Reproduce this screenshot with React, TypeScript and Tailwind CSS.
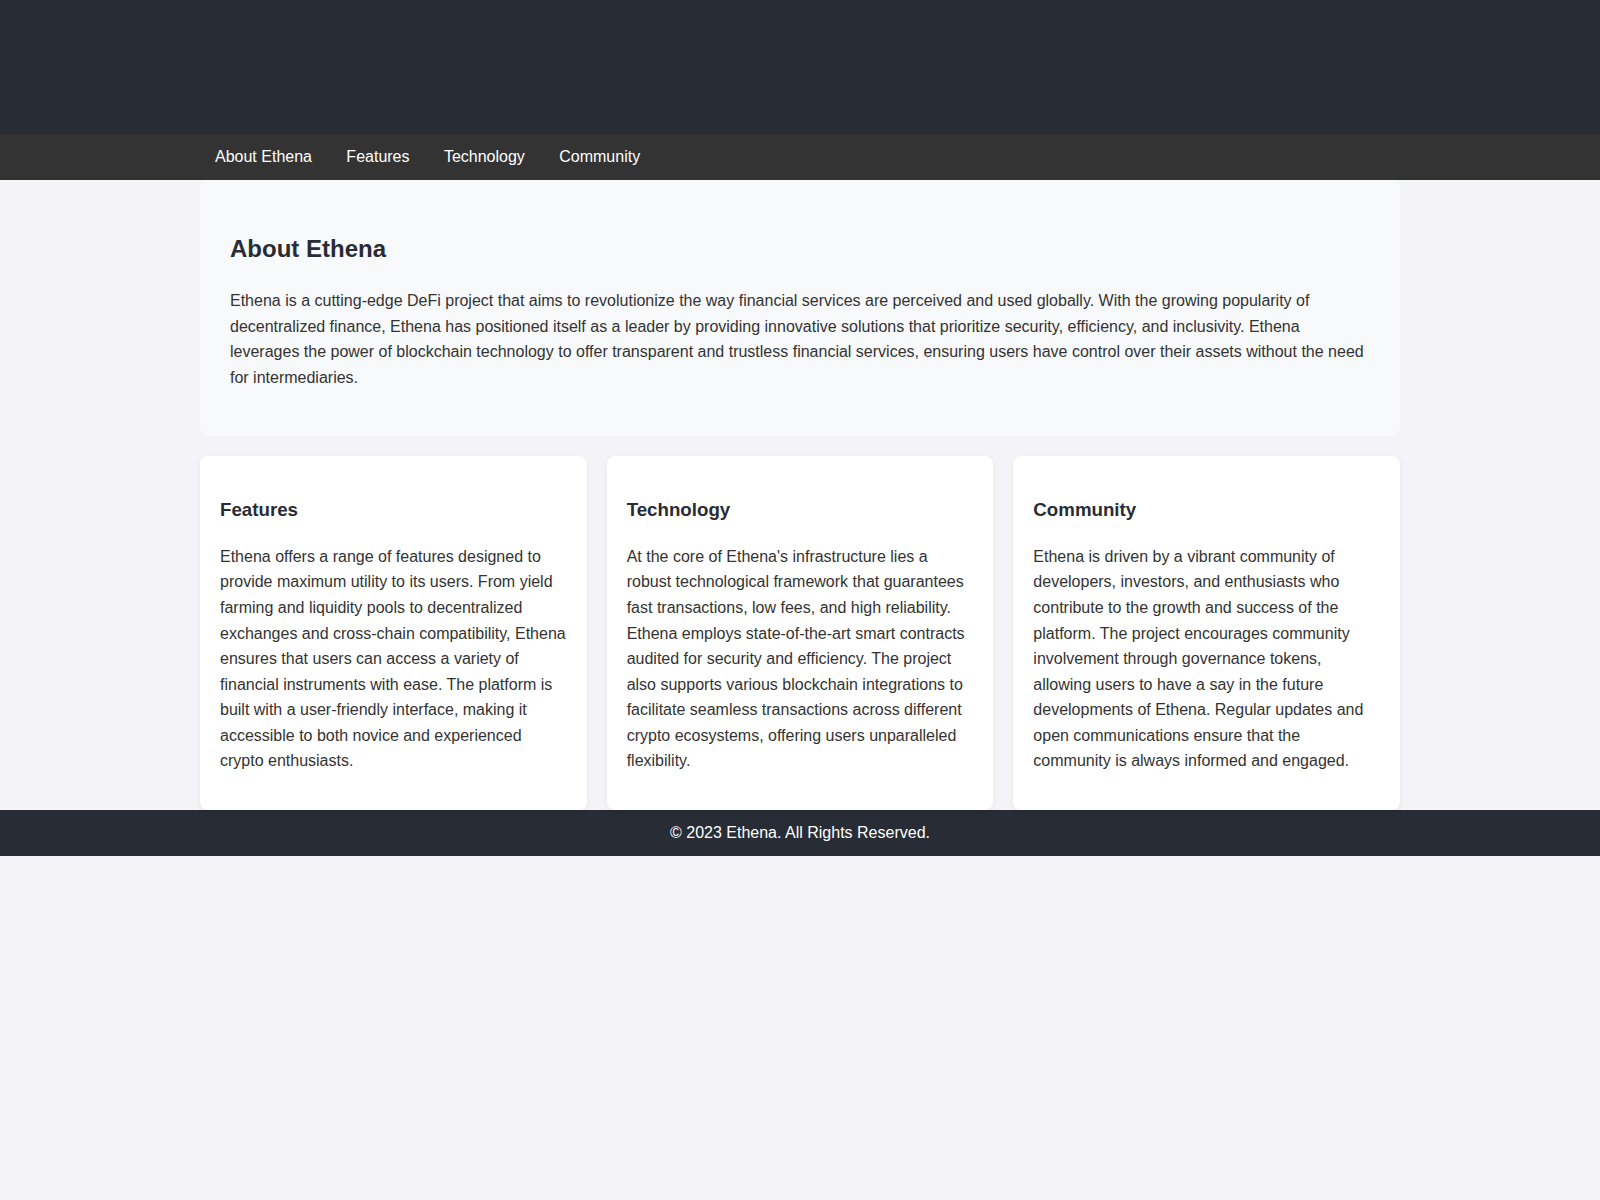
const cards = [
  {
    title: "Features",
    body: "Ethena offers a range of features designed to provide maximum utility to its users. From yield farming and liquidity pools to decentralized exchanges and cross-chain compatibility, Ethena ensures that users can access a variety of financial instruments with ease. The platform is built with a user-friendly interface, making it accessible to both novice and experienced crypto enthusiasts.",
  },
  {
    title: "Technology",
    body: "At the core of Ethena's infrastructure lies a robust technological framework that guarantees fast transactions, low fees, and high reliability. Ethena employs state-of-the-art smart contracts audited for security and efficiency. The project also supports various blockchain integrations to facilitate seamless transactions across different crypto ecosystems, offering users unparalleled flexibility.",
  },
  {
    title: "Community",
    body: "Ethena is driven by a vibrant community of developers, investors, and enthusiasts who contribute to the growth and success of the platform. The project encourages community involvement through governance tokens, allowing users to have a say in the future developments of Ethena. Regular updates and open communications ensure that the community is always informed and engaged.",
  },
];

const links = ["About Ethena", "Features", "Technology", "Community"];

export default function App() {
  return (
    <div
      className="min-h-[1200px] bg-[#f4f4f8] text-[16px] leading-[1.6] text-[#333]"
      style={{ fontFamily: '"Liberation Sans", Arial, sans-serif' }}
    >
      <header className="h-[134px] bg-[#282c34]" />
      <nav className="bg-[#333333] py-[10px]">
        <ul className="mx-auto flex w-[1200px] gap-[4.4px]">
          {links.map((l) => (
            <li key={l} className="px-[15px]">
              <a className="text-white">{l}</a>
            </li>
          ))}
        </ul>
      </nav>
      <main className="mx-auto w-[1200px]">
        <section className="rounded-lg bg-[#f8f9fb] p-[30px]">
          <h2 className="my-5 text-[24px] font-bold text-[#282c34]">About Ethena</h2>
          <p className="mb-4">
            Ethena is a cutting-edge DeFi project that aims to revolutionize the way financial services are perceived and used globally. With the growing popularity of decentralized finance, Ethena has positioned itself as a leader by providing innovative solutions that prioritize security, efficiency, and inclusivity. Ethena leverages the power of blockchain technology to offer transparent and trustless financial services, ensuring users have control over their assets without the need for intermediaries.
          </p>
        </section>
        <div className="mt-5 grid grid-cols-3 gap-5">
          {cards.map((c) => (
            <div
              key={c.title}
              className="rounded-lg bg-white p-5 shadow-[0_2px_6px_rgba(0,0,0,0.06)]"
            >
              <h3 className="my-[18.72px] text-[18.72px] font-bold text-[#282c34]">{c.title}</h3>
              <p className="mb-4">{c.body}</p>
            </div>
          ))}
        </div>
      </main>
      <footer className="bg-[#282c34] py-[10px] text-center text-white">
        © 2023 Ethena. All Rights Reserved.
      </footer>
    </div>
  );
}
